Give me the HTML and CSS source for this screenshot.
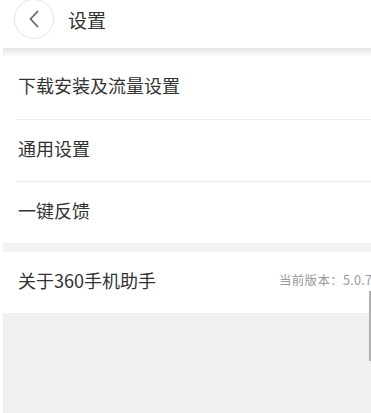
FILE: index.html
```html
<!DOCTYPE html>
<html lang="zh-CN">
<head>
    <meta charset="UTF-8">
    <meta name="viewport" content="width=device-width, initial-scale=1.0">
    <title>设置</title>
    <link rel="stylesheet" href="styles.css">
</head>
<body>
    <div class="header">
        <div class="back-btn">
            <svg width="14" height="20" viewBox="0 0 14 20">
                <path d="M10.5 2.5 L3.5 10 L10.5 17.5" fill="none" stroke="#666" stroke-width="1.8" stroke-linecap="round" stroke-linejoin="round"/>
            </svg>
        </div>
        <h1 class="title">设置</h1>
    </div>
    <div class="shadow"></div>

    <div class="group">
        <div class="item first">下载安装及流量设置</div>
        <div class="item">通用设置</div>
        <div class="item last">一键反馈</div>
    </div>

    <div class="gap"></div>

    <div class="group">
        <div class="item about">
            <span>关于360手机助手</span>
            <span class="version">当前版本：5.0.7</span>
        </div>
    </div>

    <div class="footer">
        <div class="scrollbar"></div>
    </div>
</body>
</html>
```

FILE: styles.css
```css
body {
    margin: 0;
    background: #ffffff;
    font-family: "Noto Sans CJK SC", "Noto Sans", sans-serif;
    color: #333;
    width: 371px;
    height: 413px;
    overflow: hidden;
}
.header {
    height: 48px;
    display: flex;
    align-items: center;
    background: #fff;
}
.back-btn {
    width: 40px;
    height: 40px;
    margin-left: 14px;
    margin-top: -10px;
    border: 1px solid #e4e4e4;
    border-radius: 50%;
    display: flex;
    align-items: center;
    justify-content: center;
    box-sizing: border-box;
}
.title {
    margin: -10px 0 0 14px;
    font-size: 19px;
    font-weight: normal;
    color: #333;
}
.shadow {
    height: 8px;
    margin-left: 3px;
    background: linear-gradient(#e6e6e6, #fafafa);
}
.item {
    height: 62px;
    box-sizing: border-box;
    padding: 0 0 6px 18px;
    display: flex;
    align-items: center;
    font-size: 18px;
    color: #333;
    position: relative;
}
.item::after {
    content: "";
    position: absolute;
    left: 16px;
    right: 0;
    bottom: 0;
    height: 1px;
    background: #ececec;
}
.item.first {
    height: 64px;
}
.item.last {
    height: 61px;
}
.item.last::after,
.item.about::after {
    display: none;
}
.gap {
    height: 9px;
    margin-left: 3px;
    background: #f2f2f2;
}
.about {
    height: 61px;
    justify-content: space-between;
    white-space: nowrap;
}
.version {
    flex-shrink: 0;
    width: 92px;
    overflow: hidden;
    font-size: 12.5px;
    letter-spacing: 0.3px;
    color: #999;
}
.footer {
    height: 102px;
    margin-left: 3px;
    background: #eef1f0;
    position: relative;
}
.scrollbar {
    position: absolute;
    right: 0;
    top: -22px;
    width: 2px;
    height: 70px;
    background: #b0b0b0;
}
```
